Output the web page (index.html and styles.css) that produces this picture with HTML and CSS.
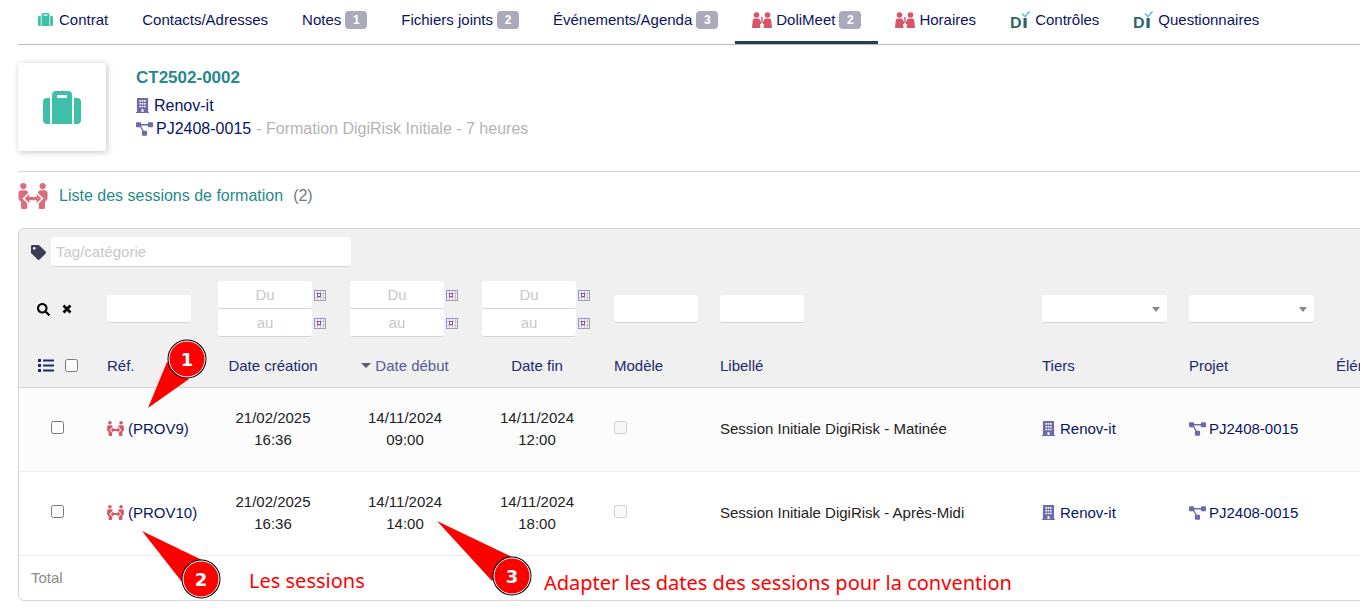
FILE: index.html
```html
<!DOCTYPE html>
<html lang="fr">
<head>
    <meta charset="UTF-8">
    <meta name="viewport" content="width=device-width, initial-scale=1.0">
    <title>Contrat - DoliMeet</title>
    <link rel="stylesheet" href="styles.css">
</head>
<body>
    <!-- Icon set -->
    <svg class="sprite" aria-hidden="true">
        <symbol id="i-suitcase" viewBox="0 0 38 33">
            <path d="M4 7h3v26H4a4 4 0 0 1-4-4V11a4 4 0 0 1 4-4zM31 7h3a4 4 0 0 1 4 4v18a4 4 0 0 1-4 4h-3z"/>
            <path fill-rule="evenodd" d="M9 33V4a4 4 0 0 1 4-4h12a4 4 0 0 1 4 4v29zM14 4v3h10V4z"/>
        </symbol>
        <symbol id="i-building" viewBox="0 0 448 512">
            <path fill-rule="evenodd" d="M436 480h-20V24c0-13-11-24-24-24H56C43 0 32 11 32 24v456H12c-7 0-12 5-12 12v20h448v-20c0-7-5-12-12-12zM118 70h56v56h-56zM274 70h56v56h-56zM118 166h56v56h-56zM274 166h56v56h-56zM118 262h56v56h-56zM274 262h56v56h-56zM196 70h56v56h-56zM196 166h56v56h-56zM196 262h56v56h-56zM188 384h72v96h-72z"/>
        </symbol>
        <symbol id="i-project" viewBox="0 0 640 512">
            <path d="M32 0h128c18 0 32 14 32 32v32h256V32c0-18 14-32 32-32h128c18 0 32 14 32 32v128c0 18-14 32-32 32H480c-18 0-32-14-32-32v-32H192v17l101 175h91c18 0 32 14 32 32v128c0 18-14 32-32 32H256c-18 0-32-14-32-32V352l16-25-78-135H32c-18 0-32-14-32-32V32C0 14 14 0 32 0z"/>
        </symbol>
        <symbol id="i-arrows" viewBox="0 0 28 25">
            <circle cx="4.700" cy="3" r="3"/>
            <circle cx="23.300" cy="3" r="3"/>
            <path d="M3 7h4q1.500 0 2 1.500l1 3V18H8.500v5.500Q8.500 25 7 25H4q-1.500 0-1.500-1.500V18L.8 16.500Q0 15.500 0 14v-4q0-3 3-3z"/>
            <path d="M25 7h-4q-1.500 0-2 1.500l-1 3V18h1.500v5.500q0 1.500 1.500 1.500h3q1.500 0 1.500-1.500V18l1.700-1.500q.8-1 .8-2.500v-4q0-3-3-3z"/>
            <path class="arrow-gap" d="M6 15l4.500-4.500v3h7v-3L22 15l-4.500 4.500v-3h-7v3z"/>
            <path d="M6 15l4.500-4.500v3h7v-3L22 15l-4.500 4.500v-3h-7v3z"/>
        </symbol>
        <symbol id="i-meet" viewBox="0 0 20 16">
            <circle cx="4.500" cy="3" r="2.800"/>
            <circle cx="15.500" cy="3" r="2.800"/>
            <path d="M2.500 6.500h4q.8 0 1.200 1l1.300 2.500v2H8l.5 4H0l.8-8q.2-1.500 1.700-1.500zM17.500 6.500h-4q-.8 0-1.200 1L11 10v2h1l-.5 4H20l-.8-8q-.2-1.500-1.700-1.500z"/>
            <path d="M9.300 5h1.400v6H9.300z"/>
        </symbol>
        <symbol id="i-di" viewBox="0 0 20 18">
            <text class="di-text" x="0" y="17">D</text>
            <path fill="#2c6562" d="M13.500 7h3.200v10h-3.200z"/>
            <path fill="none" stroke="#6cc5c4" stroke-width="1.600" d="M12 2.500l3 3L19.500.5"/>
        </symbol>
        <symbol id="i-tag" viewBox="0 0 512 512">
            <path d="M0 252.118V48C0 21.490 21.490 0 48 0h204.118a48 48 0 0 1 33.941 14.059l211.882 211.882c18.745 18.745 18.745 49.137 0 67.882L293.823 497.941c-18.745 18.745-49.137 18.745-67.882 0L14.059 286.059A48 48 0 0 1 0 252.118zM112 64c-26.510 0-48 21.490-48 48s21.490 48 48 48 48-21.490 48-48-21.490-48-48-48z"/>
        </symbol>
        <symbol id="i-search" viewBox="0 0 512 512">
            <path d="M505 442.700L405.300 343c-4.500-4.500-10.600-7-17-7H372c27.600-35.300 44-79.700 44-128C416 93.100 322.900 0 208 0S0 93.100 0 208s93.100 208 208 208c48.300 0 92.700-16.400 128-44v16.300c0 6.400 2.500 12.500 7 17l99.700 99.700c9.400 9.400 24.600 9.400 33.900 0l28.300-28.300c9.400-9.400 9.400-24.600.1-34zM208 336c-70.700 0-128-57.200-128-128 0-70.700 57.200-128 128-128 70.700 0 128 57.200 128 128 0 70.700-57.200 128-128 128z"/>
        </symbol>
        <symbol id="i-cross" viewBox="0 0 10 10">
            <path d="M1.500 1.500l7 7M8.500 1.500l-7 7" fill="none" stroke="currentColor" stroke-width="2.600"/>
        </symbol>
        <symbol id="i-list" viewBox="0 0 16 13">
            <path d="M0 0h3v3H0zM0 5h3v3H0zM0 10h3v3H0zM5 .5h11v2H5zM5 5.500h11v2H5zM5 10.500h11v2H5z"/>
        </symbol>
        <symbol id="i-cal" viewBox="0 0 12 11">
            <path fill="#f6f6fa" d="M0 0h12v11H0z"/>
            <path fill="#c4c4cc" d="M3 1h1v9H3zM6 1h1v9H6zM9 1h1v9H9zM1 3h10v1H1zM1 7h10v1H1z"/>
            <path fill="#9090dc" d="M0 0h12v1H0zM0 0h1v11H0z"/>
            <path fill="#a0a0a8" d="M11 1h1v10h-1zM1 10h11v1H1z"/>
            <path fill="#8c50a0" fill-rule="evenodd" d="M3 3h4v4H3zM4 4v2h2V4z"/>
        </symbol>
    </svg>

    <nav class="tabs">
        <a class="tab" href="#"><svg class="tab-case"><use href="#i-suitcase"/></svg>Contrat</a>
        <a class="tab" href="#">Contacts/Adresses</a>
        <a class="tab" href="#">Notes<span class="badge">1</span></a>
        <a class="tab" href="#">Fichiers joints<span class="badge">2</span></a>
        <a class="tab" href="#">Événements/Agenda<span class="badge">3</span></a>
        <a class="tab active" href="#"><svg class="tab-meet"><use href="#i-meet"/></svg>DoliMeet<span class="badge">2</span></a>
        <a class="tab" href="#"><svg class="tab-meet"><use href="#i-meet"/></svg>Horaires</a>
        <a class="tab" href="#"><svg class="tab-di"><use href="#i-di"/></svg>Contrôles</a>
        <a class="tab" href="#"><svg class="tab-di"><use href="#i-di"/></svg>Questionnaires</a>
    </nav>

    <header class="banner">
        <div class="photo"><svg><use href="#i-suitcase"/></svg></div>
        <div class="banner-info">
            <h1>CT2502-0002</h1>
            <div><a href="#"><svg class="i-building"><use href="#i-building"/></svg>Renov-it</a></div>
            <div><a href="#"><svg class="i-project"><use href="#i-project"/></svg>PJ2408-0015</a><span class="project-title">- Formation DigiRisk Initiale - 7 heures</span></div>
        </div>
    </header>

    <main>
        <div class="list-title">
            <svg><use href="#i-arrows"/></svg>
            <h2>Liste des sessions de formation</h2>
            <span>(2)</span>
        </div>

        <form class="list">
            <div class="category">
                <svg><use href="#i-tag"/></svg>
                <input type="text" placeholder="Tag/catégorie" aria-label="Tag/catégorie">
            </div>
            <table>
                <colgroup>
                    <col class="col-select">
                    <col class="col-ref">
                    <col class="col-date">
                    <col class="col-date">
                    <col class="col-date">
                    <col class="col-model">
                    <col>
                    <col class="col-link">
                    <col class="col-link">
                    <col class="col-link">
                </colgroup>
                <thead>
                    <tr class="filters">
                        <td>
                            <div class="search">
                                <button type="button" aria-label="Rechercher"><svg class="i-search"><use href="#i-search"/></svg></button>
                                <button type="button" aria-label="Effacer"><svg class="i-cross"><use href="#i-cross"/></svg></button>
                            </div>
                        </td>
                        <td><input type="text" aria-label="Réf."></td>
                        <td>
                            <div class="range"><input type="text" placeholder="Du" aria-label="Date création du"><button type="button" aria-label="Calendrier"><svg><use href="#i-cal"/></svg></button></div>
                            <div class="range"><input type="text" placeholder="au" aria-label="Date création au"><button type="button" aria-label="Calendrier"><svg><use href="#i-cal"/></svg></button></div>
                        </td>
                        <td>
                            <div class="range"><input type="text" placeholder="Du" aria-label="Date début du"><button type="button" aria-label="Calendrier"><svg><use href="#i-cal"/></svg></button></div>
                            <div class="range"><input type="text" placeholder="au" aria-label="Date début au"><button type="button" aria-label="Calendrier"><svg><use href="#i-cal"/></svg></button></div>
                        </td>
                        <td>
                            <div class="range"><input type="text" placeholder="Du" aria-label="Date fin du"><button type="button" aria-label="Calendrier"><svg><use href="#i-cal"/></svg></button></div>
                            <div class="range"><input type="text" placeholder="au" aria-label="Date fin au"><button type="button" aria-label="Calendrier"><svg><use href="#i-cal"/></svg></button></div>
                        </td>
                        <td><input type="text" aria-label="Modèle"></td>
                        <td><input type="text" aria-label="Libellé"></td>
                        <td><div class="select"><select aria-label="Tiers"><option></option></select></div></td>
                        <td><div class="select"><select aria-label="Projet"><option></option></select></div></td>
                        <td></td>
                    </tr>
                    <tr class="titles">
                        <th>
                            <div class="columns">
                                <svg><use href="#i-list"/></svg>
                                <input type="checkbox" aria-label="Tout sélectionner">
                            </div>
                        </th>
                        <th>Réf.</th>
                        <th class="center">Date création</th>
                        <th class="center sorted">Date début</th>
                        <th class="center">Date fin</th>
                        <th>Modèle</th>
                        <th>Libellé</th>
                        <th>Tiers</th>
                        <th>Projet</th>
                        <th>Élément</th>
                    </tr>
                </thead>
                <tbody>
                    <tr class="odd">
                        <td class="center"><input type="checkbox" aria-label="PROV9"></td>
                        <td><a href="#"><svg class="i-arrows"><use href="#i-arrows"/></svg>(PROV9)</a></td>
                        <td class="center">21/02/2025<br>16:36</td>
                        <td class="center">14/11/2024<br>09:00</td>
                        <td class="center">14/11/2024<br>12:00</td>
                        <td><input type="checkbox" aria-label="Modèle" disabled></td>
                        <td>Session Initiale DigiRisk - Matinée</td>
                        <td><a href="#"><svg class="i-building"><use href="#i-building"/></svg>Renov-it</a></td>
                        <td><a href="#"><svg class="i-project"><use href="#i-project"/></svg>PJ2408-0015</a></td>
                        <td></td>
                    </tr>
                    <tr>
                        <td class="center"><input type="checkbox" aria-label="PROV10"></td>
                        <td><a href="#"><svg class="i-arrows"><use href="#i-arrows"/></svg>(PROV10)</a></td>
                        <td class="center">21/02/2025<br>16:36</td>
                        <td class="center">14/11/2024<br>14:00</td>
                        <td class="center">14/11/2024<br>18:00</td>
                        <td><input type="checkbox" aria-label="Modèle" disabled></td>
                        <td>Session Initiale DigiRisk - Après-Midi</td>
                        <td><a href="#"><svg class="i-building"><use href="#i-building"/></svg>Renov-it</a></td>
                        <td><a href="#"><svg class="i-project"><use href="#i-project"/></svg>PJ2408-0015</a></td>
                        <td></td>
                    </tr>
                    <tr class="total">
                        <td colspan="10">Total</td>
                    </tr>
                </tbody>
            </table>
        </form>
    </main>

    <!-- Numbered callouts drawn over the list -->
    <svg class="callouts" width="1100" height="608">
        <g class="pointer">
            <path d="M148 408l19-46 22 17z"/>
            <path d="M142 531l60 29-20 22z"/>
            <path d="M437 521l75 36-20 24z"/>
        </g>
        <g class="ring">
            <circle cx="187" cy="359" r="18"/>
            <circle cx="201" cy="579" r="18"/>
            <circle cx="512" cy="576" r="18"/>
        </g>
        <g class="disc">
            <circle cx="187" cy="359" r="18"/>
            <circle cx="201" cy="579" r="18"/>
            <circle cx="512" cy="576" r="18"/>
        </g>
        <g class="number">
            <text x="187" y="366">1</text>
            <text x="201" y="586">2</text>
            <text x="512" y="583">3</text>
        </g>
        <g class="note">
            <text x="249" y="588">Les sessions</text>
            <text x="544" y="590">Adapter les dates des sessions pour la convention</text>
        </g>
    </svg>
</body>
</html>
```
FILE: styles.css
```css
* {
    box-sizing: border-box;
}

body {
    position: relative;
    margin: 0;
    padding-left: 18px;
    overflow-x: hidden;
    background: #fff;
    color: #222;
    font-family: "Liberation Sans", Arial, sans-serif;
    font-size: 15px;
}

a {
    color: #0a1464;
    text-decoration: none;
}

svg {
    fill: currentColor;
}

.sprite {
    position: absolute;
    width: 0;
    height: 0;
}

/* Tabs */
.tabs {
    display: flex;
    height: 45px;
    padding-left: 3px;
    border-bottom: 1px solid #bbb;
    white-space: nowrap;
}

.tab {
    display: flex;
    align-items: center;
    padding: 0 17px 2px;
    border-bottom: 3px solid transparent;
}

.tab.active {
    border-bottom-color: #263c5c;
    border-radius: 2px 2px 0 0;
}

.badge {
    width: 22px;
    margin-left: 4px;
    border-radius: 4px;
    background: #aaaaba;
    color: #fff;
    font-size: 12px;
    font-weight: bold;
    line-height: 18px;
    text-align: center;
}

.tab-case {
    width: 15px;
    height: 13px;
    margin-right: 6px;
    color: #3ebfa8;
}

.tab-meet {
    width: 20px;
    height: 16px;
    margin-right: 4px;
    color: #d65567;
}

.tab-di {
    width: 20px;
    height: 18px;
    margin-right: 5px;
}

.di-text {
    fill: #2c6562;
    font-family: Lato, sans-serif;
    font-size: 15px;
    font-weight: 900;
}

/* Banner */
.banner {
    display: flex;
    gap: 30px;
    padding: 18px 0 20px;
    border-bottom: 1px solid #d4d4d4;
    font-size: 16px;
    line-height: 23px;
}

.photo {
    display: flex;
    align-items: center;
    justify-content: center;
    width: 88px;
    height: 88px;
    box-shadow: 1px 1px 6px rgba(0, 0, 0, 0.25);
    color: #3ebfa8;
}

.photo svg {
    width: 38px;
    height: 33px;
}

.banner-info h1 {
    margin: 4px 0 5px;
    color: #26898c;
    font-size: 17px;
    line-height: 22px;
}

.project-title {
    margin-left: 5px;
    color: #b4b4b4;
}

.i-building {
    width: 13px;
    height: 15px;
    margin-right: 5px;
    color: #6c6aa8;
    vertical-align: -2px;
}

.i-project {
    width: 17px;
    height: 14px;
    margin-right: 3px;
    color: #6c6aa8;
    vertical-align: -2px;
}

.i-arrows {
    width: 17px;
    height: 15px;
    margin-right: 4px;
    color: #d65567;
    vertical-align: -2px;
}

.arrow-gap {
    stroke: #fff;
    stroke-width: 3px;
}

/* List title */
.list-title {
    display: flex;
    align-items: center;
    height: 56px;
    padding-bottom: 8px;
    font-size: 16px;
    color: #777;
}

.list-title svg {
    width: 30px;
    height: 26px;
    margin-right: 11px;
    color: #db6e7e;
}

.list-title h2 {
    margin: 0 10px 0 0;
    color: #26898c;
    font-size: 16px;
    font-weight: normal;
}

/* List */
.list {
    min-width: 1455px;
    overflow: hidden;
    border: 1px solid #d4d4d4;
    border-radius: 6px;
    background: #f0f0f0;
}

input,
select {
    font-family: inherit;
    font-size: 15px;
}

input[type="text"],
select {
    display: block;
    width: 84px;
    height: 28px;
    padding: 0 5px;
    border: 0;
    border-bottom: 1px solid #d4d4d4;
    border-radius: 3px;
    background: #fff;
}

input::placeholder {
    color: #c8c8c8;
    opacity: 1;
}

input[type="checkbox"] {
    width: 13px;
    height: 13px;
    margin: 0;
}

.category {
    display: flex;
    align-items: center;
    gap: 5px;
    padding: 8px 12px 7px;
}

.category svg {
    width: 15px;
    height: 15px;
    color: #3c3c54;
}

.category input[type="text"] {
    width: 300px;
    height: 30px;
}

table {
    width: 100%;
    table-layout: fixed;
    border-collapse: collapse;
}

.col-select {
    width: 77px;
}

.col-ref {
    width: 111px;
}

.col-date {
    width: 132px;
}

.col-model {
    width: 106px;
}

.col-link {
    width: 147px;
}

th,
td {
    padding: 0 11px;
    text-align: left;
    white-space: nowrap;
}

.center {
    text-align: center;
}

.filters td {
    height: 70px;
}

.search {
    display: flex;
    align-items: center;
    gap: 12px;
    padding-left: 7px;
}

button {
    display: flex;
    padding: 0;
    border: 0;
    background: none;
    color: #000;
    cursor: pointer;
}

.i-search {
    width: 13px;
    height: 13px;
}

.i-cross {
    width: 10px;
    height: 10px;
}

.range {
    display: flex;
    align-items: center;
    gap: 2px;
}

.range input[type="text"] {
    width: 94px;
    text-align: center;
}

.range svg {
    width: 12px;
    height: 11px;
}

.select {
    position: relative;
    width: 125px;
}

.select select {
    width: 100%;
    appearance: none;
}

.select::after {
    content: "";
    position: absolute;
    top: 12px;
    right: 7px;
    border: 4px solid transparent;
    border-top: 5px solid #888;
    border-bottom: 0;
}

.titles th {
    height: 43px;
    border-bottom: 1px solid #d4d4d4;
    color: #1e286e;
    font-weight: normal;
}

.titles .sorted {
    color: #565a94;
}

.sorted::before {
    content: "";
    display: inline-block;
    margin-right: 4px;
    border: 5px solid transparent;
    border-top-color: #5c5c70;
    border-bottom: 0;
    vertical-align: 3px;
}

.columns {
    display: flex;
    align-items: center;
    gap: 11px;
    padding-left: 8px;
}

.columns svg {
    width: 16px;
    height: 13px;
}

tbody tr {
    background: #fff;
}

tbody tr.odd {
    background: #fcfcfc;
}

tbody td {
    height: 84px;
    border-bottom: 1px solid #ececec;
    line-height: 22px;
}

.total td {
    height: 45px;
    padding: 0 12px;
    border-bottom: 0;
    color: #8c8c8c;
}

/* Callouts */
.callouts {
    position: absolute;
    top: 0;
    left: 0;
    pointer-events: none;
}

.pointer {
    fill: #f00;
}

.ring {
    fill: #000;
    stroke: #000;
    stroke-width: 3px;
}

.disc {
    fill: #f00;
    stroke: #fff;
    stroke-width: 1px;
}

.number {
    fill: #fff;
    font-family: "DejaVu Sans", sans-serif;
    font-size: 18px;
    font-weight: bold;
    text-anchor: middle;
}

.note {
    fill: #f00;
    font-family: "Noto Sans", sans-serif;
    font-size: 20px;
}
```
